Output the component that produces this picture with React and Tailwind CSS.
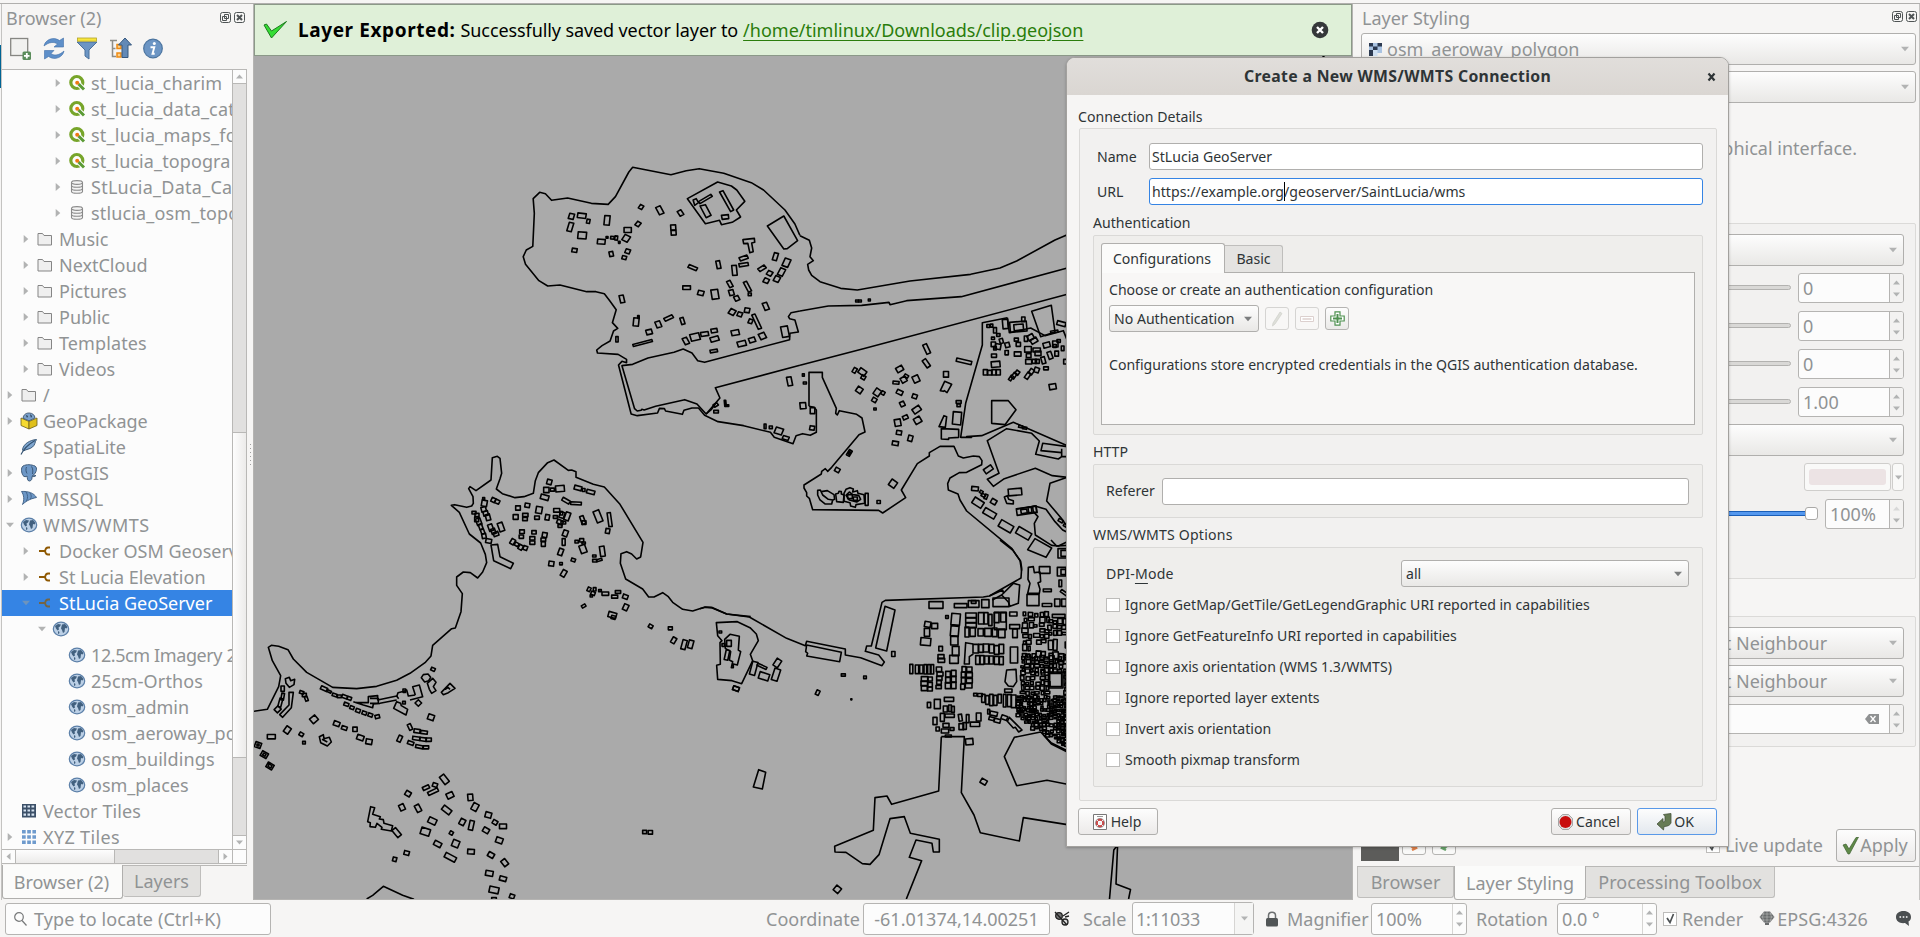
import React from "react";

/* ---------- map geometry ---------- */

const parse = (s) => s.split(";").map((r) => r.trim()).filter(Boolean).map((r) => r.split(",").map(Number));

const Boxes = ({ data }) =>
  parse(data).map(([x, y, w, h, r = 0], i) => (
    <rect key={i} x={x - w / 2} y={y - h / 2} width={w} height={h} transform={`rotate(${r} ${x} ${y})`} vectorEffect="non-scaling-stroke" />
  ));

const Lines = ({ data }) => data.map((d, i) => <path key={i} d={"M" + d} vectorEffect="non-scaling-stroke" />);

const NORTH_LINES = [
  "1437 256 1424 222 1398 180 1342 120 1310 98 1238 70 1174 56 1140 62 1100 74 1000 52 990 66 955 140 936 163 892 160 830 144 788 151 772 131 757 127 740 146 743 190 739 289 722 300 714 320 720 343 755 392 778 408 810 405 880 425 904 425 926 431 940 452 957 479 947 518 961 535 950 543 941 573 920 587 906 600 908 609 962 613 984 628 984 638 972 634 963 645 996 792 1012 797 1065 789 1070 775 1083 776 1086 783 1130 793 1134 781 1155 774 1172 774 1188 796 1223 815 1290 827 1360 847 1370 862 1419 881 1427 857 1444 851 1464 856 1480 847 1480 780 1474 772 1461 769",
  "1437 646 1216 713 1228 744 1192 792 1168 762 1136 749 1060 769 1030 780 1024 778 1022 781 1012 783 1005 776 972 647 1000 643 1040 624 1108 607 1132 597 1155 609 1170 632 1188 637 1410 569 1411 550 1433 546 1424 510 1410 506 1407 500 1414 488 1437 483",
  "1143 146 1222 96 1258 108 1272 120 1293 154 1271 180 1282 201 1260 217 1232 224 1227 211 1190 221z",
  "1172 155 1204 133 1208 139 1176 161z",
  "1227 126 1236 122 1264 180 1256 185z",
  "1176 168 1190 164 1205 196 1192 203z",
  "1158 150 1166 146 1172 158 1162 166z",
  "1232 196 1250 194 1251 206 1234 208z",
  "1352 228 1395 198 1431 272 1404 296 1395 297z",
  "1288 269 1318 265 1319 277 1311 279 1315 305 1306 308 1301 280 1290 281z",
  "1192 792 1206 778 1216 762",
];

const NORTH_BOXES =
  "840,199,13,16,15;867,197,22,14,8;884,214,8,12,10;933,211,14,28,5;837,231,12,26,15;868,256,22,20,5;848,301,13,11,10;918,275,20,14,5;947,263,9,8,5;957,264,7,12,5;965,277,4,6;933,262,5,5;983,265,16,18,30;987,240,19,15;1014,222,11,13,35;1022,171,10,12,30;1071,181,13,24,-25;1125,189,11,16,-30;1106,232,13,15,-3;1107,248,13,14,-3;987,304,12,12,20;944,312,10,14,-10;978,323,11,10,15;1157,353,24,9,25;1224,344,10,23,-10;1266,361,12,30,-5;1290,324,22,10,-22;1290,344,24,9,-10;1338,355,20,10,-35;1358,370,13,13,30;1349,392,13,13,25;1373,320,11,22,15;1402,338,16,24,22;1389,366,14,22,25;1377,387,14,16,25;1254,402,10,20,-25;1258,428,12,16,-15;1272,445,12,14,-25;1300,410,9,32,-25;1306,433,8,8;1141,413,20,11;1178,429,15,13,15;1215,433,18,28,-8;1348,469,12,22,-20;1260,486,15,16,30;1280,493,12,12,20;1299,481,13,13,10;1308,514,10,12,20;1324,515,9,46,-22;972,447,11,22,-12;1009,516,14,24,5;1015,501,4,8;1067,523,13,18,-20;1094,504,24,9,-28;1043,546,15,14,-15;1130,513,9,20,-15;1026,579,52,6,-17;959,568,6,16;1139,573,12,20,-25;1163,561,24,20,-15;1188,552,20,12,-10;1213,542,16,11,-10;1214,567,22,13,-18;1212,603,19,8,-10;1268,548,20,15,-12;1285,581,22,15,-15;1312,570,16,14,-20;1339,558,16,18,-25;1398,545,18,32,-10;1410,694,12,26,-10;1446,675,5,7;1450,699,8,6;1445,767,15,18,-5;1470,782,12,18;1469,834,12,12,10;1242,760,4,18,-5;1247,767,8,5;1218,785,12,8;1217,765,12,8,-35;1346,829,5,14;1361,832,8,8;1382,843,20,18,20;1400,864,16,10,20";

const EAST_LINES = [
  "0 257 28 271 35 294 30 320 40 332 23 343 26 360 35 376 60 395 122 415 172 420 330 393 512 373 600 354 650 333 765 270 802 254",
  "0 483 85 468 185 466 267 457 270 464 320 452 484 440 802 354",
  "0 646 190 596 802 433",
  "27 769 27 667 67 667 67 682 109 775 107 790 112 795 118 782 170 793 186 804 195 846 177 854 95 952 83 964 76 956 65 964 64 972 12 1005 12 1014 20 1028 20 1038 28 1045 38 1079 236 1081 248 1089 317 1043 304 1020 352 941 388 918 388 908 420 889 462 889 475 918 490 924 520 918 538 920 546 932 545 944 500 967 478 968 450 984 443 1001 445 1020 474 1032 480 1050 500 1083 636 1196 660 1232 665 1262",
  "622 503 547 518 547 585 497 760 482 862 515 862 500 860 545 857 640 817 802 887",
  "622 503 628 548 692 534 735 557 790 542 802 572",
  "695 484 754 466 765 546 722 560z",
  "575 752 625 752 648 779 615 824 575 820z",
  "424 836 476 838 476 862 446 864 446 868 424 867z",
  "432 797 440 800 436 832 417 830z",
  "460 785 485 787 482 825 457 822z",
  "421 722 434 694 455 703 441 728 433 722 430 724z",
  "802 920 785 920 775 927 707 913 718 873 695 850 620 836 562 872 597 970 562 988 580 1009 613 986 706 955 757 977 802 982 750 1000 740 1053 784 1105 802 1130",
  "802 890 728 880 723 902 785 908M785 896 785 920",
  "650 1078 705 1068 738 1078 765 1115 788 1140 802 1147",
  "700 1085 714 1100 703 1120 706 1155 755 1186 775 1188 802 1175",
  "705 1166 755 1194 738 1222 683 1199z",
  "53 1021 61 1020 68 1035 85 1048 98 1050 95 1062 75 1062 60 1050 53 1035z",
  "64 1025 82 1022 102 1034 104 1048 98 1050",
  "107 1032 115 1030 117 1024 124 1025 124 1032 132 1035 130 1057 110 1055z",
  "132 1030 138 1018 150 1013 160 1017 158 1026 172 1022 174 1030 192 1034 194 1060 168 1064 166 1072 152 1068 150 1058 132 1054z",
  "138 1036 148 1026 158 1034 176 1036 182 1048 170 1056 148 1050z",
  "613 1041 622 1037 626 1048 640 1052 640 1062 620 1060z",
];

const EAST_BOXES =
  "534,1058,32,20,33;569,1090,38,18,30;618,1129,42,22,30;671,1150,44,22,30;525,1016,20,12,5;544,1026,9,8,30;550,1036,12,8,30;558,1040,8,14,20;581,1055,16,14,30;645,1026,40,20,-5;565,958,26,15,-35;680,1082,60,20,-8;672,1084,18,12,-8;690,1080,10,16,-8;704,1078,10,18,-8;200,1048,9,36;150,1040,14,12;166,1046,12,10;380,597,12,30,-25;379,640,12,26,-35;438,673,15,17;492,634,46,10,13;476,756,15,8;476,766,10,8;299,657,20,15,-30;311,689,16,16,-30;319,678,12,8,30;348,687,18,20,-25;288,698,18,8,5;299,727,18,12,25;344,739,14,12,20;307,762,13,14,-25;350,779,24,16,-35;353,811,20,18,-30;316,802,15,11,-25;293,818,18,20,-10;297,848,15,12,10;331,865,13,17,15;286,880,18,12,10;178,720,17,17,35;187,666,22,16,35;190,682,12,12,30;164,661,10,15,30;232,727,18,20,35;223,750,13,12,30;249,729,10,10,30;225,777,7,6;236,1056,10,9;279,1001,20,20,35;148,909,10,18,30;148,909,5,8,30;112,960,14,12,30;171,453,8,6;180,453,8,6;208,450,6,6;616,522,16,28,-5;655,530,50,30,-5;656,532,28,18,-5;670,508,10,14;565,528,9,8;575,527,7,9;585,541,9,16;595,555,10,8;579,565,9,7;604,573,10,14,-15;580,583,13,14;594,590,16,16,10;585,595,8,10;622,585,13,14,-15;582,617,15,10;620,608,10,13;649,569,12,9;655,583,13,12;653,612,20,13;684,598,20,17;587,643,26,17,-5;692,562,18,16,-30;702,572,20,14,-30;678,566,10,16;710,600,22,12;714,610,18,14;686,617,14,12;686,635,18,14;703,634,13,12;712,634,12,12;730,631,11,20,-15;740,585,20,15,-15;750,616,12,22,-20;766,582,16,18;764,588,10,8;776,573,10,8;788,595,8,14;770,611,11,15;738,655,14,9;758,710,20,16,-10;796,635,10,14;556,667,12,16;569,668,12,14;582,667,12,16;595,667,12,16;633,684,8,16,35;642,677,10,18,35;652,668,11,12,35;683,677,11,20,35;694,665,12,16,35;710,660,14,14,20;784,521,26,12,15;763,545,22,6,-10;662,830,12,6,10;674,834,12,6,10;782,1112,14,8,30;796,1126,10,8,30";

const WEST_LINES = [
  "1502 530 1430 522 1388 503 1365 501 1328 513 1298 508 1268 487 1255 470 1238 458 1212 471 1196 471 1178 447 1127 417 1111 370 1113 341 1130 335 1145 342 1160 357 1172 351 1179 307 1110 193 1063 141 1030 133 978 112 978 95 965 90 955 91 912 60 893 68 865 98 856 122 850 160 822 170 795 173 757 161 739 147 750 116 755 100 750 55 742 49 727 53 723 120 678 152 660 140 656 146 669 170 670 190 665 198 650 202 614 194 604 196 628 217 658 282 692 309 706 343 710 368 698 396 683 414 661 398 640 396 620 411 620 436 637 461 633 515 616 564 605 566 548 616 543 648 525 668 480 700 440 721 380 739 320 746 248 742 170 697 130 657 114 629 86 619 64 616 55 622 67 662 92 707 86 740 52 808 12 814",
  "723 315 743 313 750 350 790 370 782 386 731 362z",
  "117 757 130 757 124 803 98 832 89 824 117 795z",
  "106 716 118 712 122 722 134 718 132 734 118 742 108 730z",
  "532 730 548 715 558 727 550 740 558 752 545 760 538 748z",
  "514 713 520 704 534 702 542 712 536 722 524 726z",
  "574 757 600 730 615 745 595 758 580 764z M586 748 594 742 600 748",
  "496 765 488 740 508 735 518 770 480 780 M496 765 475 768 470 750 462 754 444 758 440 770",
  "310 785 340 795 368 803 370 792 390 790 440 780 M318 788 355 788 355 770 383 767 383 780 440 768 446 776 M360 775 385 775 385 790 360 790",
  "431 805 440 785 452 790 454 797 473 808 468 825z",
  "208 890 220 884 222 896 238 892 244 906 232 918 212 908z M216 898 232 906",
  "362 1100 374 1103 368 1123 391 1130 388 1137 400 1139 402 1150 428 1157 424 1173 394 1168 396 1162 381 1150 376 1162 360 1160 361 1148 353 1145z",
  "350 1377 368 1366 400 1339 458 1366 492 1378",
];

const WEST_BOXES =
  "898,126,14,14,15;889,150,16,16;907,149,12,9;930,146,26,18,-5;884,172,24,14,15;984,144,22,12,15;1001,150,8,9;1022,156,24,11,15;948,182,24,10,30;978,190,32,8,3;804,204,14,13;832,196,14,12,10;797,231,15,14;826,225,16,10;825,237,14,10;867,210,18,20,10;861,233,14,10;892,232,12,16,10;920,211,18,11;916,231,12,8;936,225,14,18,20;952,229,14,24,20;934,220,8,10;930,246,18,12,20;930,258,12,8;940,248,14,8;998,240,11,24,-20;1002,248,12,11;1044,229,18,36,-22;1079,239,10,42,-8;1073,273,12,14,10;816,275,14,11;814,290,13,10;852,277,13,10;847,295,15,10;847,308,15,10;884,285,14,14,10;880,299,14,10;880,312,12,14;946,280,14,18,20;941,306,9,20;932,336,13,20,20;980,305,10,8;995,301,12,10;1001,309,10,6;999,327,18,24,-20;1057,334,14,30,-8;1033,348,10,6;1034,362,12,8;1048,360,16,6,-15;788,305,12,16,30;800,313,12,10,30;812,322,12,14,30;826,324,12,12,20;904,371,15,14,8;933,371,8,7;970,360,12,9,20;941,400,13,20,30;703,190,16,18,10;701,176,6,6;730,180,12,12,25;742,185,13,11,25;701,208,14,14,-15;707,220,14,14,-15;714,232,13,18,-15;722,263,13,20,-20;730,274,12,16,-20;738,282,15,12,-20;753,261,15,26,-20;672,218,12,8;681,225,12,10;680,238,12,14;686,245,14,20,-20;692,260,10,16,-20;698,275,10,14,-20;702,288,12,14,-10;716,303,17,12,10;1017,448,9,12,25;1034,448,8,10;1050,452,8,6;1029,460,12,10,20;1024,468,7,6;1066,461,20,10;1104,456,16,8;1094,470,18,9;1126,470,15,12,20;1001,498,12,8,-30;1127,502,14,18,25;1087,525,24,16,15;1090,532,12,10,15;1202,559,12,10,30;1261,565,12,9;1271,601,12,18,30;1302,614,13,28,15;1322,613,14,24,15;1458,746,18,12,20;1184,1176,12,10;1201,1177,13,11;98,746,10,16;98,770,8,20,10;91,788,9,26,15;83,808,16,14,-45;155,757,12,8,20;163,765,12,10;169,776,8,14,-20;222,746,20,10,25;237,754,14,6,25;254,765,14,8,20;268,769,12,8;284,770,16,9,20;298,775,12,9,20;289,793,14,9,20;306,803,12,9,20;324,812,13,10,20;343,819,13,10,20;361,825,13,10,20;382,830,13,10,-15;192,838,20,18,-40;112,870,16,20,35;154,883,12,10,30;162,908,8,8;64,890,24,13;43,944,20,16,30;43,944,8,7,30;60,978,20,16,30;60,978,10,8,30;24,915,18,16,20;24,915,6,6;260,851,18,13,20;283,864,16,10,20;315,868,13,13;331,893,20,14,20;357,905,18,15,10;449,896,11,19,25;480,861,10,18,-25;501,873,18,11,8;522,877,20,9,8;499,895,22,10,8;519,898,20,10,8;536,899,16,10;482,909,18,10,20;508,920,22,9,12;528,922,16,9;543,832,18,16,20;549,688,12,9,25;505,789,14,14,45;462,788,8,8;463,752,8,10;583,1018,16,28,-38;528,1043,20,10,-25;549,1055,32,10,-25;555,1035,14,11,20;600,1066,20,16,-25;474,1061,16,14,30;456,1102,15,18,-25;504,1105,14,22,-28;661,1072,15,19,-5;675,1101,17,22,28;590,1110,28,16,38;547,1143,24,17,25;637,1146,15,18,28;664,1156,13,28,12;715,1125,18,16,15;735,1147,14,12,30;759,1159,21,14;708,1171,18,14,30;748,1201,20,16,20;526,1175,27,20,18;604,1179,10,10,30;617,1211,20,20,22;563,1212,22,14,28;601,1252,35,15,28;663,1235,20,14,3;723,1245,18,14,30;764,1268,15,20,-38;718,1300,22,15,10;759,1316,20,13,15;732,1350,28,18,12;786,1369,14,12,20;732,1377,14,8;470,1239,15,12,15;434,1258,11,12,15;440,1178,14,28,-40";

const TOWN_LINES = [
  "900 0 938 30 962 64 965 84 963 114 942 126 868 168 850 171 556 181 546 187 514 318 500 318 496 334 536 345 553 366 546 377 482 353 436 345 436 327 320 304 316 317 260 295 148 231 80 222 35 203 16 202 0 206",
  "49 248 112 245 150 263 169 282 175 302 151 343 158 362 125 431 96 422 53 418 50 376 61 373 60 308 66 302 53 287z",
  "74 298 90 283 118 289 115 330 122 335 112 375 100 372 100 383 94 383 98 365 88 360 92 335 76 325z",
  "320 315 424 337 419 365 320 348 323 340 317 335z",
  "555 199 585 210 560 333 527 324z",
  "176 689 197 697 187 747 160 741z",
  "940 130 959 135 955 190 930 199 925 186 905 165z M877 180 905 165 M868 168 908 150 911 162",
  "820 312 797 308 793 372 808 372 808 350 820 342",
  "920 390 948 388 950 425 940 440 925 438 915 425z",
  "985 82 1000 80 1003 98 1020 96 1022 125 1014 128 1020 148 1018 160 983 160 990 130 984 118z",
  "724 590 793 590 784 758 822 825 841 878 958 903 970 833 1102 854",
  "724 590 716 753 575 793 561 768 525 773 520 871 404 919 405 936 438 937 487 971 510 973 537 944 570 836 613 830 631 880 718 898 718 936 700 936 696 910 648 900 628 952 665 962 619 1077",
  "1102 632 1053 608 1022 576 943 592 913 650 950 737 1041 721 1102 733",
  "1102 636 1054 612 1030 584",
  "928 532 966 570 956 576 946 562 940 564 922 544z",
  "1053 0 1070 18 1102 16",
];

const TOWN_BOXES =
  "81,345,11,30,12;87,310,14,18;70,315,8,8;61,276,8,6;161,385,16,40,15;186,379,30,7,25;192,409,30,20,18;232,369,16,24,33;228,404,18,36,18;108,446,18,12,20;353,458,10,14,25;430,405,12,7;495,412,8,8;454,478,3,3;580,342,10,15;412,1048,18,18,40;851,725,18,14,30;808,605,22,18,-5;708,195,42,20;683,253,18,16,10;704,258,18,16;681,277,16,24;677,305,30,22,5;741,231,8,8;767,238,26,34,5;764,273,24,30,5;763,302,22,26;767,333,20,28;762,358,26,24;722,326,11,14;723,350,18,12;724,361,20,12;782,197,38,12;821,192,32,20;821,186,14,8;856,191,22,24;903,187,48,26;813,226,32,14;813,241,32,14;813,256,32,14;801,276,12,30;818,276,16,26;843,235,16,34;858,235,12,34;871,240,10,34;842,277,16,22;864,277,20,24;901,243,36,52;890,233,14,30;910,232,16,28;884,277,14,26;905,280,20,26;827,326,16,26;843,325,14,24;858,324,16,24;875,326,14,26;890,330,14,26;904,327,14,28;833,360,12,26;846,360,12,26;860,360,12,24;874,360,12,24;890,361,14,24;904,362,12,24;634,387,9,28;651,388,10,26;664,388,10,26;676,388,8,28;687,388,8,28;697,388,8,28;674,417,20,14;690,417,14,12;673,430,20,14;690,434,14,14;673,445,18,14;690,447,14,12;717,388,16,14;720,402,18,12;718,415,16,12;717,427,14,12;716,441,16,10;744,403,14,18;744,420,14,18;744,437,16,18;761,400,14,18;761,418,14,18;761,436,14,20;792,388,12,16;790,404,12,16;790,422,12,18;788,440,12,16;808,388,16,14;808,405,18,14;808,422,18,14;806,437,20,14;940,222,22,12;944,260,30,12;945,280,14,26;942,345,22,48;925,452,22,10;1034,90,32,20;999,180,36,34;1042,151,24,8;1041,195,28,9;1088,40,28,28;1092,40,18,18;1085,95,26,26;1090,96,14,16;1081,130,8,20;1092,158,22,8,35;1072,188,16,22;1092,188,14,22;687,495,10,16;712,492,18,28;747,478,28,12;736,507,12,18;750,505,8,20;759,508,8,18;705,543,12,22;727,532,12,24;749,527,28,10;738,556,18,12;713,567,10,12;735,573,22,12;756,567,12,8;781,533,10,20,-8;803,536,8,24;784,560,14,18;794,558,10,20;836,531,14,24;825,553,28,13;745,588,18,6;826,464,10,8;840,465,14,9;850,475,10,24;862,480,10,26;874,480,10,34;886,481,10,30;899,476,10,26;914,482,8,38;928,482,12,36;941,484,14,38;881,521,22,12,12;875,536,16,9,15;892,542,18,11,15;913,533,18,12,20;866,515,6,14;1067,420,44,48;1067,420,36,40;1076,228,38,10";

/* Dense blocks of the old town are filled by a seeded generator. */
function denseBlocks() {
  let seed = 11;
  const rnd = () => ((seed = (seed * 16807) % 2147483647) / 2147483647);
  const out = [];
  const fill = (x0, x1, y0, y1, cw, ch, keep) => {
    for (let y = y0; y < y1; y += ch)
      for (let x = x0; x < x1; x += cw) {
        const w = cw * (0.45 + rnd() * 0.65);
        const h = ch * (0.4 + rnd() * 0.65);
        const dx = (rnd() - 0.5) * cw * 0.35;
        const dy = (rnd() - 0.5) * ch * 0.35;
        const ok = rnd() < 0.88;
        if (ok && keep(x, y)) out.push([x + cw / 2 + dx, y + ch / 2 + dy, w, h, (rnd() - 0.5) * 6]);
      }
  };
  const any = () => true;
  fill(966, 1036, 216, 286, 17, 16, any);
  fill(1044, 1100, 236, 286, 14, 17, any);
  fill(966, 1036, 297, 336, 14, 19, any);
  fill(1044, 1100, 297, 336, 16, 36, any);
  fill(962, 1100, 346, 386, 14, 13, any);
  fill(960, 1040, 392, 460, 15, 15, any);
  fill(1091, 1100, 392, 460, 11, 12, any);
  fill(950, 1100, 466, 508, 10, 10, any);
  fill(950, 1100, 510, 626, 11, 10, (x, y) => y < 566 + Math.max(0, (x - 1015) * 0.66) && y < 520 + (x - 945) * 1.1);
  return out;
}

const MapCanvas = () => (
  <svg viewBox="254 56 1098 843" width="1098" height="843" className="block" fill="none" stroke="#000" strokeWidth="1.6" strokeLinejoin="round">
    <g transform="translate(250 150) scale(0.38267 0.33333)">
      <Lines data={NORTH_LINES} />
      <Boxes data={NORTH_BOXES} />
    </g>
    <g transform="translate(800 150) scale(0.33333)">
      <Lines data={EAST_LINES} />
      <Boxes data={EAST_BOXES} />
    </g>
    <g transform="translate(250 440) scale(0.33333)">
      <Lines data={WEST_LINES} />
      <Boxes data={WEST_BOXES} />
    </g>
    <g transform="translate(700 540) scale(0.33333)">
      <Lines data={TOWN_LINES} />
      <Boxes data={TOWN_BOXES} />
      {denseBlocks().map(([x, y, w, h, r], i) => (
        <rect key={i} x={x - w / 2} y={y - h / 2} width={w} height={h} transform={`rotate(${r} ${x} ${y})`} vectorEffect="non-scaling-stroke" />
      ))}
    </g>
    <path d="M1109.5 899 1113.8 850 1117.6 845 1116 884 1130.5 889.500 1128.600 899M1320 60 1325 55" />
  </svg>
);

/* ---------- icons ---------- */

const Globe = () => (
  <svg width="18" height="18" viewBox="0 0 18 18">
    <ellipse cx="9" cy="9" rx="7.700" ry="6.800" fill="#bcd0e6" stroke="#5b7fa8" strokeWidth="1.200" />
    <path d="M3 6l3-2 3 .5-1 2-1.500 1 .5 2-1.500 1L4 8.500zM10 4.500l3-.5 2.500 3-1 1.500-1.500-.5-.5 4-1.500 1-1-3-1-1.500zM6 11l1.500 1-.5 2-1-.500z" fill="#41607f" />
  </svg>
);
const Folder = () => (
  <svg width="18" height="18" viewBox="0 0 18 18">
    <path d="M2 3.500h4.500l1.500 2h7.500v9.500h-13.500z" fill="#efefef" stroke="#858585" />
  </svg>
);
const Db = () => (
  <svg width="18" height="18" viewBox="0 0 18 18" fill="#f4f4f4" stroke="#8a8a8a" strokeWidth="1.100">
    <path d="M3.500 4.500v9c0 2.300 11 2.300 11 0v-9" />
    <ellipse cx="9" cy="4.500" rx="5.500" ry="1.900" />
    <path d="M3.500 7.500c0 2.300 11 2.300 11 0M3.500 10.500c0 2.300 11 2.300 11 0" fill="none" />
  </svg>
);
const QIcon = () => (
  <svg width="18" height="18" viewBox="0 0 18 18">
    <circle cx="8.800" cy="8.500" r="6" fill="none" stroke="#77a52a" strokeWidth="3.200" />
    <path d="M10 9.500l6.500 6.500" stroke="#fdfdfd" strokeWidth="5" />
    <path d="M10.500 10l5.500 5.500" stroke="#5b9b35" strokeWidth="3" />
    <circle cx="9.200" cy="8.700" r="2" fill="#ee7913" />
  </svg>
);
const Pkg = () => (
  <svg width="18" height="18" viewBox="0 0 18 18">
    <path d="M1 6l8 3.500v7.500l-8-3.500z" fill="#f5da30" stroke="#6b5e1a" strokeWidth=".8" />
    <path d="M17 6l-8 3.500v7.500l8-3.500z" fill="#e0c01a" stroke="#6b5e1a" strokeWidth=".8" />
    <path d="M3 6.200C3.500 2 7 .8 9.500 1c3 .2 5.300 2 5.500 5l-6 2.800z" fill="#7ba1cb" stroke="#33475f" strokeWidth=".8" />
    <path d="M6 3l2 1-1 2zM10 2l2 2-1 2z" fill="#22384f" />
  </svg>
);
const Feather = () => (
  <svg width="18" height="18" viewBox="0 0 18 18">
    <path d="M2.500 12C3 6 10 2 16.500 1.500c-2 3-1 5-4 7.500-3 2.500-6 2-9 4z" fill="#7fa6d0" stroke="#31506f" strokeWidth=".9" />
    <path d="M1 16.500C4 10 9 6 15 2.500" fill="none" stroke="#31506f" strokeWidth="1.100" />
  </svg>
);
const Elephant = () => (
  <svg width="18" height="18" viewBox="0 0 18 18" fill="#6d97c6" stroke="#33506f" strokeWidth=".9">
    <path d="M3 2c4-2 8-1.500 12 0 3 2 1 7-1.500 9l-1 .5c1 .5 2.500 0 3.500 0-1.500 1.500-3 1-4 1 .3 2-.5 4.500-2.500 4.500-2.500 0-2-3-2.500-5-1 1-3 1-4-.5C1.500 9 .500 4 3 2z" />
    <path d="M6.500 3c-1 2-.5 5 .5 6.500M11.500 2.500c1.500 2 1.500 5 1 7.500" fill="none" />
  </svg>
);
const Mssql = () => (
  <svg width="18" height="18" viewBox="0 0 18 18" fill="#6d97c6" stroke="#3d5f85" strokeWidth=".9">
    <path d="M1.500 1.500C8 1 14 3 16.500 7.500 12 8.500 7 10 2.500 14.500 4.500 10 4 5 1.500 1.500z" />
    <path d="M6 1.800C8 5 8 8 6.500 11M10 3c1.500 2 1.500 4 .5 6" fill="none" />
  </svg>
);
const Conn = () => (
  <svg width="18" height="18" viewBox="0 0 18 18" fill="none" stroke="#8f5902" strokeWidth="1.800">
    <path d="M3 9h6M14 5.500h-2c-2 0-2.500 1-3 3.500.5 2.500 1 3.500 3 3.500H14" />
  </svg>
);
const Grid = () => (
  <svg width="18" height="18" viewBox="0 0 18 18">
    <rect x="2" y="2" width="14" height="13.500" fill="#3c5068" />
    <path d="M3.500 3.500h2.500v2H3.500zM7.500 3.500H10v2H7.500zM11.500 3.500h2.700v2h-2.700zM3.500 7.500h2.500v2H3.500zM7.500 7.500H10v2H7.500zM11.500 7.500h2.700v2h-2.700zM3.500 11.500h2.500v2.300H3.500zM7.500 11.500H10v2.300H7.500zM11.500 11.500h2.700v2.300h-2.700z" fill="#d5e2f0" />
  </svg>
);
const Xyz = () => (
  <svg width="18" height="18" viewBox="0 0 18 18" fill="#6f9bcd">
    <path d="M2 2h3.700v3.500H2zM7.200 2h3.700v3.500H7.200zM12.400 2H16v3.500h-3.600zM2 7.200h3.700v3.500H2zM7.200 7.200h3.700v3.500H7.200zM12.400 7.200H16v3.500h-3.600zM2 12.400h3.700v3.500H2zM7.200 12.400h3.700v3.500H7.200zM12.400 12.400H16v3.500h-3.600z" />
  </svg>
);

const DockButtons = () => (
  <div className="flex gap-[3px]">
    <svg width="11" height="11" viewBox="0 0 11 11" fill="none" stroke="#4f5455">
      <rect x=".5" y=".5" width="10" height="10" rx="2" />
      <path d="M4.500 2.500h4v4h-4zM2.500 4.500h4v4h-4z" />
    </svg>
    <svg width="11" height="11" viewBox="0 0 11 11" fill="none" stroke="#4f5455">
      <rect x=".5" y=".5" width="10" height="10" rx="2" />
      <path d="M3 3l5 5M8 3L3 8" strokeWidth="2" />
    </svg>
  </div>
);

const Tri = ({ dir = "down", color = "#b2b3b3", s = 7 }) => {
  const d = { down: "M0 1.500h7L3.500 5.500z", up: "M0 5.500h7L3.500 1.500z", right: "M1.500 0v7L5.500 3.500z", left: "M5.500 0v7L1.500 3.500z" }[dir];
  return (
    <svg width={s} height={s} viewBox="0 0 7 7" className="shrink-0">
      <path d={d} fill={color} />
    </svg>
  );
};

/* ---------- widgets ---------- */

const Combo = ({ className, children, arrow = "#b2b3b3" }) => (
  <div className={"flex items-center rounded-[3px] border border-[#b0afad] bg-gradient-to-b from-[#fdfdfd] to-[#e9e8e6] " + className}>
    <span className="flex-1 whitespace-nowrap">{children}</span>
    <Tri color={arrow} s={8} />
  </div>
);

const Spin = ({ className, children, flat, dimUp }) => (
  <div className={"flex shrink-0 overflow-hidden rounded-[3px] border border-[#b5b4b2] bg-[#fcfcfc] " + className}>
    <span className="flex-1 self-center whitespace-nowrap pl-1">{children}</span>
    <span className={"flex w-[14px] flex-col items-center justify-center gap-[5px] border-l " + (flat ? "border-[#d6d5d3]" : "border-[#b5b4b2] bg-[#f3f2f1]")}>
      <Tri dir="up" color={dimUp ? "#d8d8d8" : "#b2b3b3"} />
      <Tri dir="down" />
    </span>
  </div>
);

const Check = ({ on }) => (
  <span className="flex h-[14px] w-[14px] shrink-0 items-center justify-center border border-[#bdbcba] bg-white">
    {on && (
      <svg width="11" height="12" viewBox="0 0 11 12" fill="none" stroke="#4c5052" strokeWidth="1.700">
        <path d="M2 5l3 4.500L8.500 1" />
      </svg>
    )}
  </span>
);

/* ---------- browser dock ---------- */

const TREE = [
  [3, "r", QIcon, "st_lucia_charim", false, "tracking-[0.15px]"],
  [3, "r", QIcon, "st_lucia_data_cat", false, "tracking-[0.15px]"],
  [3, "r", QIcon, "st_lucia_maps_fo", false, "tracking-[0.25px]"],
  [3, "r", QIcon, "st_lucia_topogra", false, "tracking-[0.1px]"],
  [3, "r", Db, "StLucia_Data_Ca", false, "tracking-[0.25px]"],
  [3, "r", Db, "stlucia_osm_topo", false, "tracking-[0.15px]"],
  [1, "r", Folder, "Music"],
  [1, "r", Folder, "NextCloud"],
  [1, "r", Folder, "Pictures"],
  [1, "r", Folder, "Public"],
  [1, "r", Folder, "Templates", false, "tracking-[0.1px]"],
  [1, "r", Folder, "Videos"],
  [0, "r", Folder, "/"],
  [0, "r", Pkg, "GeoPackage"],
  [0, "", Feather, "SpatiaLite"],
  [0, "r", Elephant, "PostGIS"],
  [0, "r", Mssql, "MSSQL", false, "tracking-[0.15px]"],
  [0, "d", Globe, "WMS/WMTS", false, "tracking-[0.5px]"],
  [1, "r", Conn, "Docker OSM Geoserv"],
  [1, "r", Conn, "St Lucia Elevation"],
  [1, "d", Conn, "StLucia GeoServer", true],
  [2, "d", Globe, ""],
  [3, "", Globe, "12.5cm Imagery 2", false, "tracking-[-0.4px]"],
  [3, "", Globe, "25cm-Orthos", false, "tracking-[0.15px]"],
  [3, "", Globe, "osm_admin"],
  [3, "", Globe, "osm_aeroway_po"],
  [3, "", Globe, "osm_buildings", false, "tracking-[0.1px]"],
  [3, "", Globe, "osm_places"],
  [0, "", Grid, "Vector Tiles", false, "tracking-[0.1px]"],
  [0, "r", Xyz, "XYZ Tiles", false, "tracking-[0.35px]"],
];
const INDENT = ["pl-[4px]", "pl-[20px]", "pl-[36px]", "pl-[52px]"];

const TreeRow = ({ row: [lvl, arrow, Icon, text, sel, tracking = ""] }) => (
  <div className={`flex h-[26px] items-center ${INDENT[lvl]} ${sel ? "bg-[#3584e4] text-white" : ""}`}>
    <span className="flex w-[14px] shrink-0 items-center">
      {arrow && <Tri dir={arrow === "r" ? "right" : "down"} s={8} color={sel ? "#6d94bd" : "#b2b3b3"} />}
    </span>
    <span className={"w-[23px] shrink-0 " + (sel ? "opacity-70" : "")}>
      <Icon />
    </span>
    <span className={"whitespace-nowrap " + tracking}>{text}</span>
  </div>
);

const BrowserDock = () => (
  <div className="flex w-[246px] shrink-0 flex-col border-l border-[#c4c3c1]">
    <div className="flex h-[30px] items-center justify-between pl-[4px] pr-[2px]">
      <span className="-mt-[3px]">Browser (2)</span>
      <span className="-mt-1"><DockButtons /></span>
    </div>
    <div className="flex h-[35px] gap-[11px] pl-[8px] pt-[3px]">
      <svg width="22" height="24" viewBox="0 0 22 24">
        <rect x=".7" y="1.500" width="17" height="17" fill="#f1f1ef" stroke="#868682" strokeWidth="1.300" />
        <rect x="12.500" y="14.500" width="8.500" height="8.500" rx="1.500" fill="#5a8c5a" />
        <path d="M14 18.800h5.500M16.800 16v5.500" stroke="#fff" strokeWidth="1.800" />
      </svg>
      <svg width="22" height="24" viewBox="0 0 22 24" fill="#5e8fc9" stroke="#3f6fa8" strokeWidth=".6">
        <path d="M1 9C2 3 10-1 16.500 3.500L20.500 1v9h-9.500l3.500-3C11 4.500 6 5 1 9z" />
        <path d="M21 14c-1 6-9 10-15.500 5.500L1.500 22v-8.500H11l-3 3c3 2.500 8 2 13-2.500z" />
      </svg>
      <svg width="22" height="24" viewBox="0 0 22 24">
        <path d="M1 5h20l-8 8v9l-4-3v-6z" fill="#6c95c4" stroke="#4a709b" />
        <rect x="1.500" y="1" width="19" height="3.200" fill="#f8e63c" stroke="#b2a429" strokeWidth=".8" />
      </svg>
      <svg width="23" height="24" viewBox="0 0 23 24">
        <path d="M1 3.500h7M3.500 3.500V19.500H7M3.500 11.500h3" fill="none" stroke="#8d8d89" strokeWidth="1.500" />
        <path d="M8 7.500h4v4H8zM8 16h4v4H8z" fill="#fbd08d" stroke="#ef8a12" strokeWidth="1.500" />
        <path d="M16 1l6.500 7h-3.500v12.500h-6V8H9.500z" fill="#6389b6" stroke="#36587f" />
      </svg>
      <svg className="-ml-px" width="22" height="24" viewBox="0 0 22 24">
        <circle cx="11" cy="11.500" r="9.300" fill="#6c95c4" stroke="#4b749f" strokeWidth="1.200" />
        <circle cx="12.300" cy="6.500" r="1.500" fill="#fff" />
        <path d="M8.500 10.200h3.800l-1.800 6.500h2.200" fill="none" stroke="#fff" strokeWidth="1.900" />
      </svg>
    </div>
    <div className="flex h-[795px] flex-col border border-l-0 border-[#b9b8b6] bg-[#fcfcfc]">
      <div className="flex h-[779px]">
        <div className="w-[230px] overflow-hidden">
          {TREE.map((row, i) => <TreeRow key={i} row={row} />)}
        </div>
        <div className="flex flex-1 flex-col border-l border-[#b9b8b6]">
          <div className="flex h-[14px] items-center justify-center border-b border-[#b9b8b6]"><Tri dir="up" /></div>
          <div className="h-[348px] bg-[#e1e0df]" />
          <div className="h-[326px] border-y border-[#b9b8b6] bg-gradient-to-r from-[#fdfdfd] to-[#ecebea]" />
          <div className="flex-1 bg-[#e1e0df]" />
          <div className="flex h-[14px] items-center justify-center border-t border-[#b9b8b6]"><Tri /></div>
        </div>
      </div>
      <div className="flex h-[14px] border-t border-[#b9b8b6]">
        <div className="flex w-[14px] items-center justify-center border-r border-[#b9b8b6]"><Tri dir="left" /></div>
        <div className="w-[99px] border-r border-[#b9b8b6] bg-gradient-to-b from-[#fdfdfd] to-[#ecebea]" />
        <div className="w-[103px] bg-[#e1e0df]" />
        <div className="flex w-[15px] items-center justify-center border-x border-[#b9b8b6]"><Tri dir="right" /></div>
      </div>
    </div>
    <div className="mt-[1px] flex border-t border-[#b9b8b6]">
      <div className="-mt-px flex h-[34px] w-[121px] items-center justify-center rounded-b-[3px] border border-t-0 border-[#b0afad] bg-[#fbfbfa] pr-[2px]">Browser (2)</div>
      <div className="flex h-[31px] w-[78px] items-center justify-center rounded-b-[3px] border border-l-0 border-t-0 border-[#bfbebc] bg-[#e2e1df] pb-[1px]">Layers</div>
    </div>
  </div>
);

/* ---------- layer styling dock ---------- */

const SliderRow = ({ value, className }) => (
  <div className={"flex h-[30px] items-center " + className}>
    <div className="-mt-[2px] h-[5px] flex-1 rounded-r-[3px] border border-[#b3b2b0] bg-[#d9d8d6]" />
    <Spin className="ml-[7px] h-[30px] w-[106px]">{value}</Spin>
  </div>
);

const StylingDock = () => (
  <div className="flex flex-1 flex-col border-r border-[#c4c3c1] pl-[8px]">
    <div className="flex h-[29px] items-center justify-between pl-[1px] pr-[2px]">
      <span className="-mt-[2px]">Layer Styling</span>
      <span className="-mt-1"><DockButtons /></span>
    </div>
    <Combo className="mr-[3px] h-[32px] shrink-0 pl-[6px] pr-[6px]">
      <span className="flex items-center gap-[4px]">
        <svg width="15" height="15" viewBox="0 0 15 15">
          <path d="M1 1h13v10H1z" fill="#a9c3e2" />
          <path d="M1 1h4v3.500H1zM9.500 1H14v3.500H9.500zM5 4.500h4.500V8H5zM1 8h4v6H1z" fill="#2b3950" />
          <path d="M5 8h4.500v6H5z" fill="#cfe0f2" />
        </svg>
        osm_aeroway_polygon
      </span>
    </Combo>
    <Combo className="mr-[3px] mt-[6px] h-[32px] shrink-0 pl-[6px] pr-[6px]" />
    <div className="mr-[62px] mt-[32px] flex h-[26px] items-center justify-end">graphical interface.</div>
    <div className="mr-[3px] mt-[62px] flex h-[356px] shrink-0 flex-col rounded-[2px] border border-[#dbdad8] bg-[#f2f1f0] px-[11px] pt-[10px]">
      <Combo className="h-[32px] shrink-0 pr-[6px]" />
      <SliderRow className="mt-[7px]" value="0" />
      <SliderRow className="mt-[8px]" value="0" />
      <SliderRow className="mt-[8px]" value="0" />
      <SliderRow className="mt-[8px]" value="1.00" />
      <Combo className="mt-[7px] h-[32px] shrink-0 pr-[6px]" />
      <div className="mt-[7px] flex h-[28px] justify-end gap-[1px]">
        <div className="w-[87px] rounded-[3px] border border-[#cfcecc] bg-[#f9f9f8] px-[4px] py-[5px]">
          <div className="h-full rounded-[3px] bg-[#ece3e4]" />
        </div>
        <div className="flex w-[12px] items-center justify-center rounded-[3px] border border-[#cfcecc] bg-[#f9f9f8]"><Tri /></div>
      </div>
      <div className="mt-[8px] flex h-[30px] items-center">
        <div className="-mt-[2px] h-[5px] flex-1 border-y border-[#1b5fb8] bg-[#5498ef]" />
        <div className="-mt-[2px] h-[13px] w-[13px] rounded-[3px] border border-[#aaa9a7] bg-white" />
        <Spin className="ml-[7px] h-[30px] w-[79px]" dimUp>100%</Spin>
      </div>
    </div>
    <div className="mr-[3px] mt-[37px] flex h-[131px] shrink-0 flex-col rounded-[2px] border border-[#dbdad8] bg-[#f2f1f0] pl-[280px] pr-[11px] pt-[10px]">
      <Combo className="h-[32px] shrink-0 pl-[22px] pr-[6px]">Nearest Neighbour</Combo>
      <Combo className="mt-[6px] h-[32px] shrink-0 pl-[22px] pr-[6px]">Nearest Neighbour</Combo>
      <Spin className="mt-[7px] h-[30px]">
        <span className="flex justify-end pr-[10px]">
          <svg width="14" height="10" viewBox="0 0 14 10">
            <path d="M0 5l4-5h10v10H4z" fill="#8f9192" />
            <path d="M5.500 2l5 6M10.500 2l-5 6" stroke="#fff" strokeWidth="1.300" />
          </svg>
        </span>
      </Spin>
    </div>
    <div className="mt-[82px] flex h-[37px] items-start">
      <div className="h-[32px] w-[38px] bg-[#5c5c5a]" />
      <div className="ml-[3px] flex h-[26px] w-[24px] items-center justify-center rounded-[3px] border border-[#b5b4b2] bg-[#f9f9f8]">
        <svg width="18" height="18" viewBox="0 0 18 18" fill="none" stroke="#e28048" strokeWidth="2.400"><path d="M5 3c-3 5 0 11 5 12M13 6v6l-3 3M8 11l3 4-4 2" /></svg>
      </div>
      <div className="ml-[6px] flex h-[26px] w-[24px] items-center justify-center rounded-[3px] border border-[#b5b4b2] bg-[#f9f9f8]">
        <svg width="18" height="18" viewBox="0 0 18 18" fill="none" stroke="#69a56c" strokeWidth="2.400"><path d="M13 3c3 5 0 11-5 12M5 6v6l3 3M10 11l-3 4 4 2" /></svg>
      </div>
      <div className="ml-auto mr-[13px] flex h-[33px] items-center gap-[5px]"><Check on /><span className="-mt-[2px]">Live update</span></div>
      <div className="mr-[3px] flex h-[33px] w-[80px] items-center justify-center gap-[1px] rounded-[3px] border border-[#b0afad] bg-gradient-to-b from-[#fdfdfd] to-[#eceae9] pr-[2px]">
        <svg width="17" height="18" viewBox="0 0 17 18"><path d="M1 8l3-1 3 5L14 .5l2.500-.5L7.500 17H6z" fill="#5f8a48" stroke="#3f6030" strokeWidth=".7" /></svg>
        <span className="-mt-[2px]">Apply</span>
      </div>
    </div>
    <div className="-ml-[4px] flex border-t border-[#b9b8b6]">
      <div className="flex h-[31px] w-[97px] items-center justify-center rounded-b-[3px] border border-t-0 border-[#bfbebc] bg-[#e2e1df] pb-[1px]">Browser</div>
      <div className="-mt-px flex h-[34px] w-[132px] items-center justify-center rounded-b-[3px] border border-t-0 border-[#b0afad] bg-[#fbfbfa]">Layer Styling</div>
      <div className="flex h-[31px] w-[189px] items-center justify-center rounded-b-[3px] border border-l-0 border-t-0 border-[#bfbebc] bg-[#e2e1df] pb-[1px] tracking-[0.05px]">Processing Toolbox</div>
    </div>
  </div>
);

/* ---------- status bar ---------- */

const StatusBar = () => (
  <div className="flex h-[37px] shrink-0 items-center pl-[5px] pr-[8px]">
    <div className="flex h-[32px] w-[266px] items-center gap-[7px] rounded-[3px] border border-[#b5b4b2] bg-[#fcfcfc] pl-[8px]">
      <svg width="13" height="14" viewBox="0 0 13 14" fill="none" stroke="#77797a" strokeWidth="1.200"><circle cx="5" cy="5" r="4.300" /><path d="M8 8.500l4.500 5" /></svg>
      <span className="tracking-[0.1px]">Type to locate (Ctrl+K)</span>
    </div>
    <div className="ml-[495px] w-[97px]">Coordinate</div>
    <div className="flex h-[32px] w-[187px] items-center justify-center rounded-[3px] border border-[#b5b4b2] bg-[#fcfcfc]">-61.01374,14.00251</div>
    <svg className="ml-[4px]" width="17" height="17" viewBox="0 0 17 17" fill="none" stroke="#222" strokeWidth="1.300">
      <circle cx="5" cy="6" r="3.300" fill="#777" /><circle cx="11" cy="12" r="3" fill="#ddd" /><path d="M1 2l12 13M9 6l6-4M11 7l4-1" />
    </svg>
    <div className="ml-[12px] w-[49px]">Scale</div>
    <div className="flex h-[33px] w-[122px] items-center rounded-[3px] border border-[#b5b4b2] bg-[#fcfcfc]">
      <span className="flex-1 pl-[3px] tracking-[-0.4px]">1:11033</span>
      <span className="flex h-full w-[19px] items-center justify-center border-l border-[#d6d5d3] bg-[#f5f5f4]"><Tri /></span>
    </div>
    <svg className="ml-[11px]" width="14" height="16" viewBox="0 0 14 16"><path d="M3.500 8V4.500C3.500 0 10.500 0 10.500 4.500V8" fill="none" stroke="#6c6f70" strokeWidth="1.500" /><rect x="1" y="7" width="12" height="8.500" rx="1.500" fill="#515556" /></svg>
    <div className="ml-[8px] w-[84px]">Magnifier</div>
    <Spin flat className="h-[32px] w-[96px]">100%</Spin>
    <div className="ml-[9px] w-[81px]">Rotation</div>
    <Spin flat className="h-[32px] w-[100px]">0.0 °</Spin>
    <div className="ml-[6px] flex items-center gap-[5px]"><Check on />Render</div>
    <svg className="ml-auto" width="16" height="17" viewBox="0 0 16 17"><path d="M5 1.500h6L15.500 7 11 12.500H5L.5 7z" fill="#686b6c" /><path d="M1 7h14M8 1v12M3 4h10M3 10h10M5 2l-1.500 5L5 12M11 2l1.500 5L11 12" fill="none" stroke="#d8d8d8" strokeWidth=".4" /><path d="M6 12.500h4V15H6z" fill="#686b6c" /></svg>
    <div className="ml-[2px] tracking-[0.1px]">EPSG:4326</div>
    <svg className="ml-[27px]" width="17" height="17" viewBox="0 0 17 17"><path d="M8.500 1C13 1 16 3.500 16 7c0 2-.8 3.500-2.500 4.500L14 16l-4-3c-5 .7-9-1.500-9-6 0-3.500 3-6 7.500-6z" fill="#4b4f51" /><path d="M4.500 6.200h1.600v1.600H4.500zM7.700 6.200h1.600v1.600H7.700zM10.900 6.200h1.600v1.600h-1.600z" fill="#fff" /></svg>
  </div>
);

/* ---------- dialog ---------- */

const OPTIONS = [
  "Ignore GetMap/GetTile/GetLegendGraphic URI reported in capabilities",
  "Ignore GetFeatureInfo URI reported in capabilities",
  "Ignore axis orientation (WMS 1.3/WMTS)",
  "Ignore reported layer extents",
  "Invert axis orientation",
  "Smooth pixmap transform",
];
const BTN = "flex h-[27px] items-center justify-center rounded-[3px] border bg-gradient-to-b from-[#fdfdfd] ";
const FIELD = "flex h-[27px] flex-1 items-center rounded-[3px] border bg-white pl-[2px] ";
const BOX = "rounded-[2px] border border-[#dad9d7] ";
const TOOL = "flex h-[23px] w-[24px] items-center justify-center rounded-[3px] border ";

const Dialog = () => (
  <div className="absolute left-[1066px] top-[57px] flex h-[790px] w-[663px] flex-col rounded-t-[9px] border border-[#a3a19e] bg-[#f6f5f4] text-[14.1px] text-[#2e3436] shadow-[0_1px_3px_rgba(0,0,0,0.25)]">
    <div className="flex h-[37px] shrink-0 items-center rounded-t-[8px] bg-gradient-to-b from-[#e1dedb] to-[#dad6d2] pl-[22px] pr-[10px]">
      <span className="-mt-[2px] flex-1 whitespace-nowrap text-center text-[15.8px] font-bold tracking-[0.32px]">Create a New WMS/WMTS Connection</span>
      <svg width="12" height="10" viewBox="0 0 12 10" stroke="#2e3436" strokeWidth="2.200"><path d="M2.500 1.500l6 7M8.500 1.500l-6 7" /></svg>
    </div>
    <div className="flex flex-1 flex-col px-[11px]">
      <div className="mt-[12px] h-[20px] leading-[20px]">Connection Details</div>
      <div className={BOX + "mt-[1px] ml-[1px] flex h-[673px] w-[638px] flex-col bg-[#f2f1f0] px-[13px]"}>
        <div className="mt-[14px] flex items-center pl-[4px]">
          <span className="w-[52px]">Name</span>
          <div className={FIELD + "border-[#b0afad]"}>StLucia GeoServer</div>
        </div>
        <div className="mt-[8px] flex items-center pl-[4px]">
          <span className="w-[52px]">URL</span>
          <div className={FIELD + "border-[#3584e4] tracking-[0.02px]"}>
            https://example.org<span className="-mr-px h-[19px] w-[1px] bg-black" />/geoserver/SaintLucia/wms
          </div>
        </div>
        <div className="mt-[8px] h-[20px] leading-[20px]">Authentication</div>
        <div className={BOX + "mt-[2px] h-[200px] bg-[#efeeec] px-[7px] pt-[7px]"}>
          <div className="flex h-[29px] items-end">
            <div className="z-10 -mb-px flex h-[30px] w-[124px] items-center justify-center rounded-t-[3px] border border-b-0 border-[#b0afad] bg-[#fbfbfa] pr-[2px]">Configurations</div>
            <div className="flex h-[27px] w-[58px] items-center justify-center rounded-tr-[3px] border border-b-0 border-l-0 border-[#bfbebc] bg-[#e4e3e1]">Basic</div>
          </div>
          <div className="h-[153px] border border-[#b0afad] bg-[#f8f7f6] px-[7px] pt-[7px]">
            <div className="h-[20px] leading-[20px] tracking-[-0.03px]">Choose or create an authentication configuration</div>
            <div className="mt-[5px] flex items-center gap-[6px]">
              <Combo className="h-[27px] w-[150px] pl-[4px] pr-[6px]" arrow="#7b7d7e">No Authentication</Combo>
              <div className={TOOL + "border-[#d5d4d2]"}>
                <svg width="12" height="16" viewBox="0 0 12 16"><path d="M9 1l2 1.500L4 13l-2.500 2L2 12z" fill="#dedfd9" stroke="#cfd0ca" strokeWidth=".7" /></svg>
              </div>
              <div className={TOOL + "border-[#d5d4d2]"}>
                <svg width="14" height="6" viewBox="0 0 14 6"><path d="M.5 .5h13v5H.5z" fill="#fff" stroke="#dcd0ce" /><path d="M2.500 3h9" stroke="#dcd0ce" strokeWidth="1.500" /></svg>
              </div>
              <div className={TOOL + "border-[#b5b4b2] bg-gradient-to-b from-[#fdfdfd] to-[#ebeae8]"}>
                <svg width="15" height="15" viewBox="0 0 15 15"><path d="M5 .8h5V5h4.200v5H10v4.200H5V10H.8V5H5z" fill="#fff" stroke="#4f9150" strokeWidth="1.200" /><path d="M7.500 3v9M3 7.500h9" stroke="#4f9150" strokeWidth="2" /></svg>
              </div>
            </div>
            <div className="mt-[23px] h-[20px] whitespace-nowrap leading-[20px] tracking-[-0.01px]">Configurations store encrypted credentials in the QGIS authentication database.</div>
          </div>
        </div>
        <div className="mt-[7px] h-[20px] leading-[20px]">HTTP</div>
        <div className={BOX + "mt-[2px] flex h-[54px] items-center bg-[#efeeec] pl-[12px] pr-[13px]"}>
          <span className="w-[56px]">Referer</span>
          <div className={FIELD + "border-[#b0afad]"} />
        </div>
        <div className="mt-[7px] h-[20px] leading-[20px] tracking-[0.2px]">WMS/WMTS Options</div>
        <div className={BOX + "mt-[2px] h-[240px] bg-[#efeeec] pl-[12px] pr-[13px] pt-[12px]"}>
          <div className="flex items-center justify-between">
            <span className="tracking-[0.2px]">DPI-<span className="underline underline-offset-4">M</span>ode</span>
            <Combo className="h-[27px] w-[288px] pl-[4px] pr-[6px]" arrow="#7b7d7e">all</Combo>
          </div>
          <div className="mt-[2px] flex flex-col">
            {OPTIONS.map((o) => (
              <div key={o} className="flex h-[31px] items-center gap-[5px] whitespace-nowrap"><Check />{o}</div>
            ))}
          </div>
        </div>
      </div>
      <div className="mt-[7px] flex">
        <div className={BTN + "w-[80px] gap-[4px] border-[#b0afad] to-[#eceae9] pr-[2px]"}>
          <svg width="14" height="16" viewBox="0 0 14 16"><path d="M.5 .5h13v15H.5z" fill="#fff" stroke="#777" /><path d="M4 2.500h6" stroke="#999" /><circle cx="7" cy="9" r="3.300" fill="#fff" stroke="#c94a4a" strokeWidth="2.200" /><path d="M3.500 5.500l7 7M10.500 5.500l-7 7" stroke="#eee" strokeWidth="1" /><circle cx="7" cy="9" r="4.600" fill="none" stroke="#777" strokeWidth=".6" /></svg>
          Help
        </div>
        <div className={BTN + "ml-auto w-[80px] gap-[3px] border-[#b0afad] to-[#eceae9] pr-[4px]"}>
          <svg width="15" height="16" viewBox="0 0 15 16"><path d="M4.500 .5h6l4 4v7l-4 4h-6l-4-4v-7z" fill="#ddd" stroke="#8a8a8a" strokeWidth=".7" /><circle cx="7.500" cy="8" r="6" fill="#c80d0d" /></svg>
          Cancel
        </div>
        <div className={BTN + "ml-[6px] w-[80px] gap-[2px] border-[#5a99e8] to-[#e3e8ee] pr-[4px]"}>
          <svg width="16" height="18" viewBox="0 0 16 18"><path d="M7.500 1.500L15 .5v9.500c-1 2.500-4 3.500-7 3.500L7.500 17 1 11 7 5.500v3.500c1.500 0 2-.5 2-2V3.500z" fill="#667b54" stroke="#47543c" strokeWidth=".8" /></svg>
          OK
        </div>
      </div>
    </div>
  </div>
);

/* ---------- window ---------- */

export default function App() {
  return (
    <div className="relative flex h-[937px] w-[1920px] flex-col overflow-hidden bg-[#f6f5f4] font-['Noto_Sans','Open_Sans',sans-serif] text-[18px] leading-[24px] text-[#909394]">
      <div className="h-[4px] shrink-0 border-b border-[#b0afad]" />
      <div className="flex h-[896px] shrink-0">
        <div className="w-px shrink-0 pt-[41px]"><div className="h-[43px] bg-[#006494]" /></div>
        <BrowserDock />
        <div className="flex w-[6px] shrink-0 flex-col items-center gap-[3px] pt-[440px]">
          {[0, 1, 2, 3, 4, 5].map((i) => <span key={i} className="h-px w-px bg-[#a0a0a0]" />)}
        </div>
        <div className="flex w-[1100px] shrink-0 flex-col border-x border-b border-[#b5b4b2] bg-[#aaaaaa]">
          <div className="flex h-[52px] shrink-0 items-center whitespace-nowrap border border-[#8b9988] bg-[#dff0d8] pl-[8px] pr-[22px] text-black">
            <svg width="25" height="18" viewBox="0 0 25 18"><path d="M1 4l2.500-1 5 7L23.500 .5 8.500 17z" fill="#35dd35" stroke="#1c7a1c" strokeWidth="1" /></svg>
            <span className="ml-[10px] text-[19px] font-bold tracking-[0.6px]">Layer Exported:</span>
            <span className="ml-[5px] tracking-[-0.1px]">Successfully saved vector layer to</span>
            <span className="ml-[5px] flex-1 text-[#2a7d0b] underline underline-offset-[3px]">/home/timlinux/Downloads/clip.geojson</span>
            <svg width="18" height="18" viewBox="0 0 18 18"><circle cx="9" cy="9" r="8.300" fill="#35383a" /><path d="M6 6l6 6M12 6l-6 6" stroke="#fff" strokeWidth="2.400" /></svg>
          </div>
          <MapCanvas />
        </div>
        <StylingDock />
      </div>
      <StatusBar />
      <Dialog />
    </div>
  );
}
